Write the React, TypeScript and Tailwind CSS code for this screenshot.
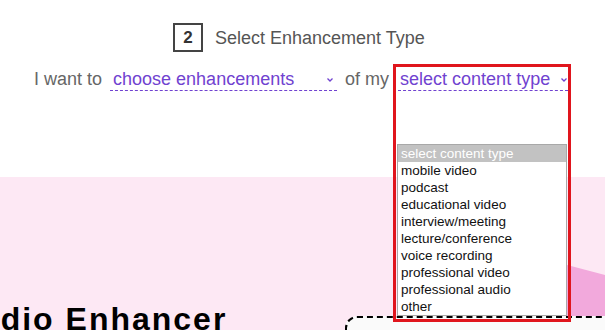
import React from 'react';

const contentTypes = [
  'select content type',
  'mobile video',
  'podcast',
  'educational video',
  'interview/meeting',
  'lecture/conference',
  'voice recording',
  'professional video',
  'professional audio',
  'other',
];

const Chevron = () => (
  <svg width="8" height="6" viewBox="0 0 8 6" className="shrink-0 mt-[2px]">
    <path d="M1.5 1.5 L4 4 L6.5 1.5" fill="none" stroke="#7042d0" strokeWidth="1.3" />
  </svg>
);

export default function App() {
  return (
    <div className="w-[605px] h-[330px] overflow-hidden flex flex-col bg-white font-['Liberation_Sans',Arial,sans-serif]">
      {/* step header */}
      <div className="h-[177px] shrink-0 flex flex-col pt-[23px]">
        <div className="flex items-center gap-3 pl-[173px]">
          <div className="w-[30px] h-[29px] border-2 border-[#444] flex items-center justify-center text-[17px] font-bold text-[#333]">
            2
          </div>
          <span className="text-[18px] text-[#555] leading-none">Select Enhancement Type</span>
        </div>

        <div className="mt-[16px] flex items-start pl-[34px] text-[18px] leading-[22px]">
          <span className="text-[#666]">I want to</span>
          <div className="ml-[8px] w-[227px] flex items-center justify-between pl-[3px] pr-[3px] border-b border-dashed border-[#7042d0] text-[#7042d0]">
            <span>choose enhancements</span>
            <Chevron />
          </div>
          <span className="ml-[8px] text-[#666]">of my</span>
          <div className="relative ml-[9px] w-[170px] flex items-center justify-between pl-[2px] border-b border-dashed border-[#7042d0] text-[#7042d0]">
            <span>select content type</span>
            <Chevron />

            {/* open native list */}
            <div className="absolute left-[-1px] top-[76px] w-[170px] border border-[#a8a8a8] bg-white z-10">
              {contentTypes.map((t, i) => (
                <div
                  key={t}
                  className={`h-[17px] pl-[3px] text-[13.5px] leading-[17px] ${i === 0 ? 'bg-[#c2c2c2] text-white' : 'text-[#111]'}`}
                >
                  {t}
                </div>
              ))}
            </div>

            {/* highlight annotation */}
            <div className="absolute left-[-5px] top-[-4px] w-[178px] h-[258px] border-[3px] border-[#e0151d] z-20 pointer-events-none" />
          </div>
        </div>
      </div>

      {/* hero */}
      <div className="relative flex-1 bg-[#fde8f4] flex items-start">
        <svg className="absolute inset-0" width="605" height="153" viewBox="0 0 605 153">
          <polygon points="450,57 605,98 605,153 450,153" fill="#f2a9dc" />
        </svg>
        <h1 className="relative shrink-0 ml-[-46px] mt-[126px] text-[32px] leading-8 font-bold tracking-[2px] text-black whitespace-nowrap">
          Audio Enhancer
        </h1>
        <div className="relative ml-auto mt-[139px] shrink-0 w-[270px] h-[40px] mr-[-10px] rounded-tl-xl border-2 border-dashed border-black bg-[#fafafa]" />
      </div>
    </div>
  );
}
